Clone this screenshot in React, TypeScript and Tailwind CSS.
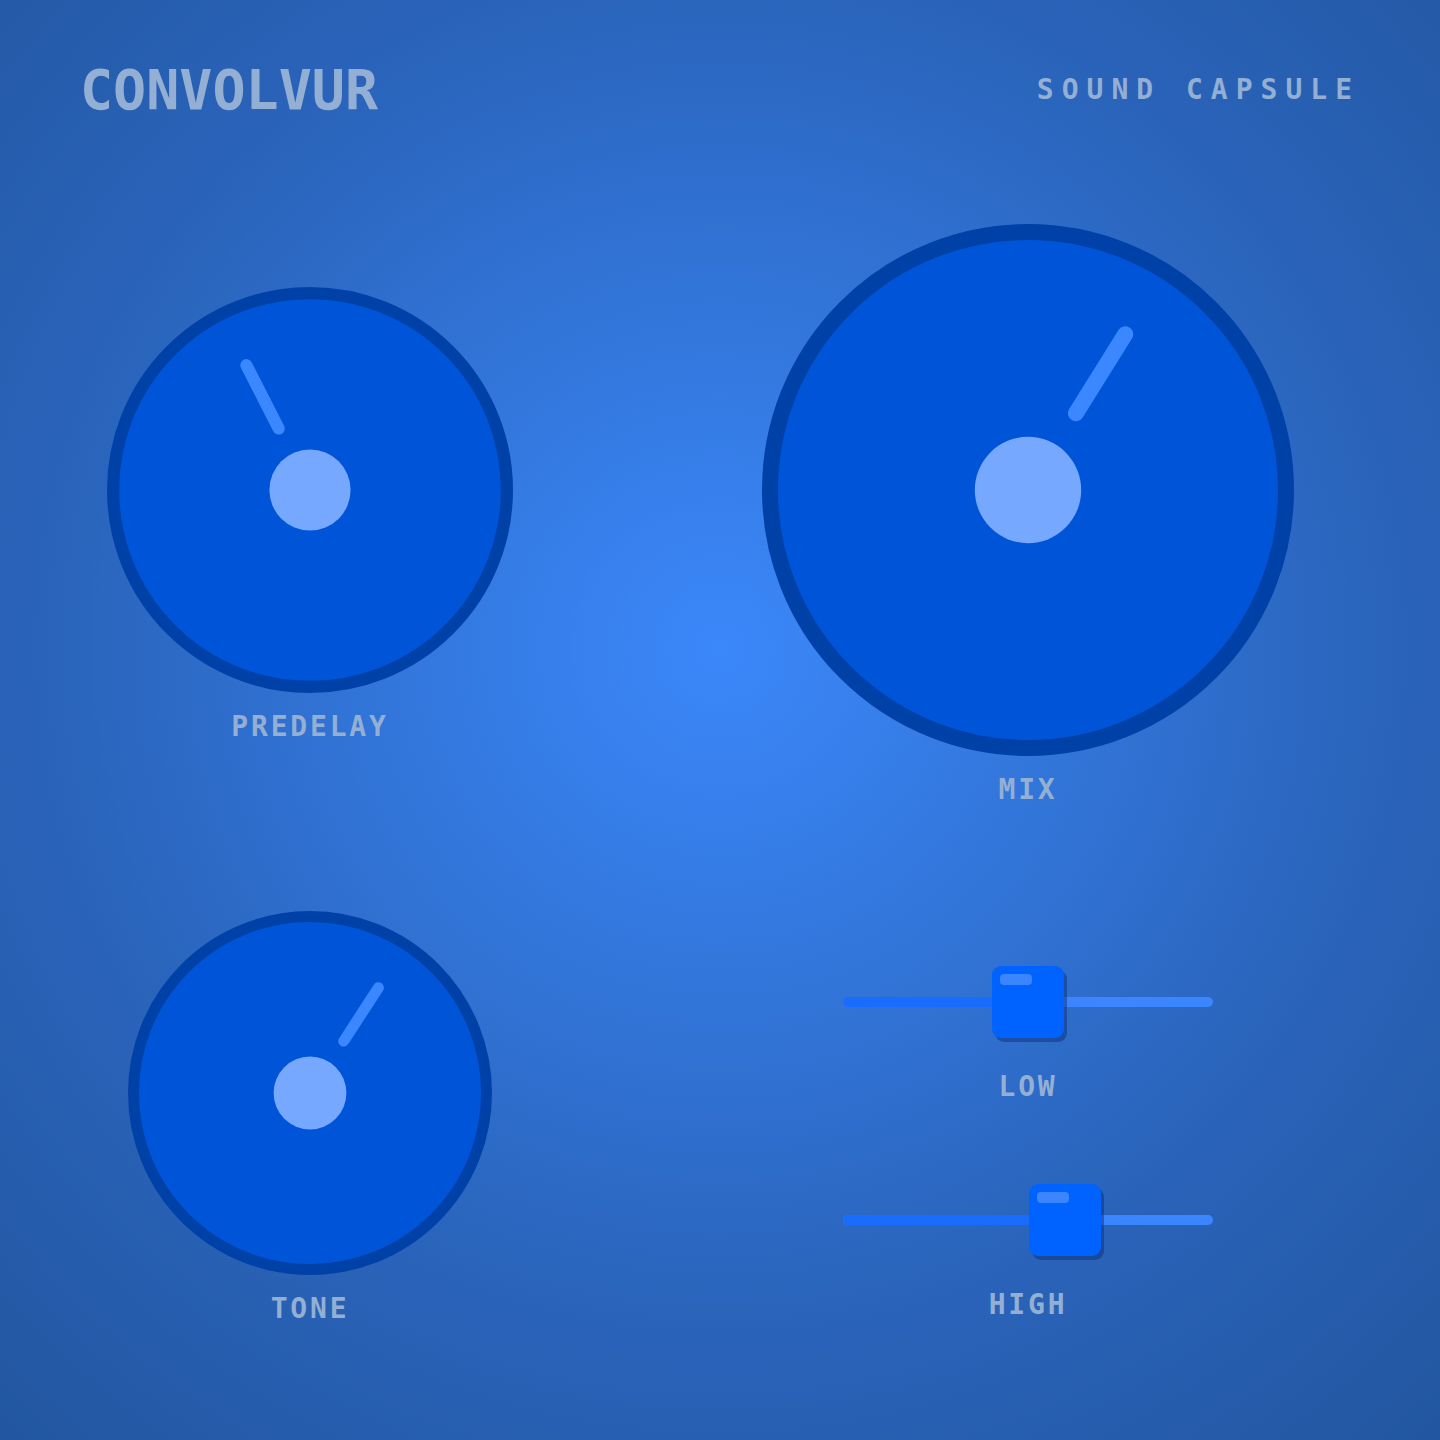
import React from "react";

const mono = "font-['DejaVu_Sans_Mono','Liberation_Mono',monospace]";

/** 노브: 원판 + 포인터 + 가운데 점 (viewBox 100 기준) */
function Knob({ size, angle, label }: { size: number; angle: number; label: string }) {
  const rad = (angle * Math.PI) / 180;
  const x1 = 50 + 17 * Math.sin(rad);
  const y1 = 50 - 17 * Math.cos(rad);
  const x2 = 50 + 34.5 * Math.sin(rad);
  const y2 = 50 - 34.5 * Math.cos(rad);

  return (
    <div className="flex flex-col items-center">
      <svg width={size} height={size} viewBox="0 0 100 100" className="block">
        <circle cx="50" cy="50" r="48.5" fill="#0054d8" stroke="#0041a8" strokeWidth="3" />
        <line x1={x1} y1={y1} x2={x2} y2={y2} stroke="#3b87ff" strokeWidth="3" strokeLinecap="round" />
        <circle cx="50" cy="50" r="10" fill="#76a8ff" />
      </svg>
      <p className={`${mono} mt-[20px] text-[28px] leading-none font-bold tracking-[0.1em] text-[#93afd3]`}>
        {label}
      </p>
    </div>
  );
}

/** 가로 슬라이더: value 0~1, 핸들 중심 기준 */
function Slider({ value, label }: { value: number; label: string }) {
  return (
    <div className="flex flex-col items-center">
      <div className="relative h-[72px] w-[370px]">
        <div className="absolute top-[31px] left-0 right-0 h-[10px] rounded-full bg-[#3b86ff]" />
        <div
          className="absolute top-[31px] left-0 h-[10px] rounded-l-full bg-[#1a6cff]"
          style={{ width: `${value * 100}%` }}
        />
        <div
          className="absolute top-0 h-[72px] w-[72px] -translate-x-1/2 rounded-[9px] bg-[#0062ff] shadow-[3px_4px_0_rgba(10,40,110,0.45)]"
          style={{ left: `${value * 100}%` }}
        >
          <div className="ml-[8px] mt-[8px] h-[11px] w-[32px] rounded-[4px] bg-[#3b86ff]" />
        </div>
      </div>
      <p className={`${mono} mt-[35px] text-[28px] leading-none font-bold tracking-[0.1em] text-[#93afd3]`}>
        {label}
      </p>
    </div>
  );
}

export default function App() {
  return (
    <div className="min-h-[1440px] w-full bg-[radial-gradient(circle_farthest-corner_at_50%_45%,#3b88fb_0%,#2a64bb_62%,#2256a0_100%)]">
      <div className="px-[80px] pt-[62px]">
        {/* 헤더 */}
        <header className="flex h-[56px] items-center justify-between">
          <h1 className={`${mono} text-[55px] leading-none font-bold text-[#93afd3]`}>CONVOLVUR</h1>
          <p className={`${mono} text-[28px] leading-none font-bold tracking-[8px] text-[#93afd3]`}>
            SOUND CAPSULE
          </p>
        </header>

        {/* 1행: 노브 두 개 */}
        <div className="mt-[106px] grid grid-cols-[460px_664px] gap-x-[156px] items-center">
          <Knob size={406} angle={-27} label="PREDELAY" />
          <Knob size={532} angle={32} label="MIX" />
        </div>

        {/* 2행: 톤 노브 + 슬라이더 */}
        <div className="mt-[107px] grid grid-cols-[460px_664px] gap-x-[156px] items-start">
          <Knob size={364} angle={33} label="TONE" />
          <div className="flex flex-col items-center gap-[83px] pt-[55px]">
            <Slider value={0.5} label="LOW" />
            <Slider value={0.6} label="HIGH" />
          </div>
        </div>
      </div>
    </div>
  );
}
